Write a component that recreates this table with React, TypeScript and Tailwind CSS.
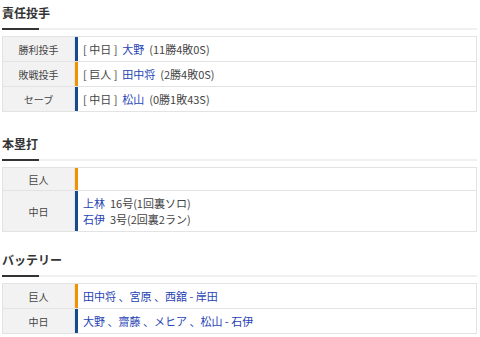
import React from 'react';

type Row = {
  label: string;
  team: 'giants' | 'dragons';
  lines: React.ReactNode[];
};

const barColor = (team: Row['team']) =>
  team === 'giants' ? 'border-[#f39200]' : 'border-[#164a8c]';

const Link = ({ children }: { children: React.ReactNode }) => (
  <span className="text-[#1f43b5]">{children}</span>
);

const Heading = ({ title }: { title: string }) => (
  <div>
    <div className="pt-[4px] text-[12px] font-bold leading-[17px] text-[#333]">{title}</div>
    <div className="mt-[7px] h-[2px] bg-[#f0f0f0]">
      <div className="h-[2px] w-[37px] bg-[#333]" />
    </div>
  </div>
);

const Table = ({ rows }: { rows: Row[] }) => (
  <div className="mt-[6px] border-l border-r border-t border-[#e3e3e3]">
    {rows.map((row, i) => (
      <div key={i} className="flex border-b border-[#e3e3e3]">
        <div className="flex w-[72px] shrink-0 items-center justify-center border-r border-[#e8e8e8] bg-[#f2f2f2] text-[10px] text-[#444]">
          {row.label}
        </div>
        <div
          className={`flex min-h-[22px] flex-1 flex-col justify-center border-l-[3px] ${barColor(row.team)} pl-[5px] text-[11px] text-[#444] ${row.lines.length ? 'py-[4px]' : ''}`}
        >
          {row.lines.map((line, j) => (
            <div key={j} className="h-[16px] overflow-hidden whitespace-pre leading-[16px]">{line}</div>
          ))}
        </div>
      </div>
    ))}
  </div>
);

const App: React.FC = () => {
  const pitchers: Row[] = [
    { label: '勝利投手', team: 'dragons', lines: [<>[ 中日 ]  <Link>大野</Link>  (11勝4敗0S)</>] },
    { label: '敗戦投手', team: 'giants', lines: [<>[ 巨人 ]  <Link>田中将</Link>  (2勝4敗0S)</>] },
    { label: 'セーブ', team: 'dragons', lines: [<>[ 中日 ]  <Link>松山</Link>  (0勝1敗43S)</>] },
  ];

  const homers: Row[] = [
    { label: '巨人', team: 'giants', lines: [] },
    {
      label: '中日',
      team: 'dragons',
      lines: [
        <><Link>上林</Link>  16号(1回裏ソロ)</>,
        <><Link>石伊</Link>  3号(2回裏2ラン)</>,
      ],
    },
  ];

  const battery: Row[] = [
    { label: '巨人', team: 'giants', lines: [<Link>田中将 、宮原 、西舘 - 岸田</Link>] },
    { label: '中日', team: 'dragons', lines: [<Link>大野 、齋藤 、メヒア 、松山 - 石伊</Link>] },
  ];

  return (
    <div className="h-[337px] w-[480px] overflow-hidden bg-white pl-[2px] pr-[3px] font-['Noto_Sans_CJK_JP','Noto_Sans',sans-serif]">
      <Heading title="責任投手" />
      <Table rows={pitchers} />

      <div className="mt-[19px]">
        <Heading title="本塁打" />
        <Table rows={homers} />
      </div>

      <div className="mt-[15px]">
        <Heading title="バッテリー" />
        <Table rows={battery} />
      </div>
    </div>
  );
};

export default App;
